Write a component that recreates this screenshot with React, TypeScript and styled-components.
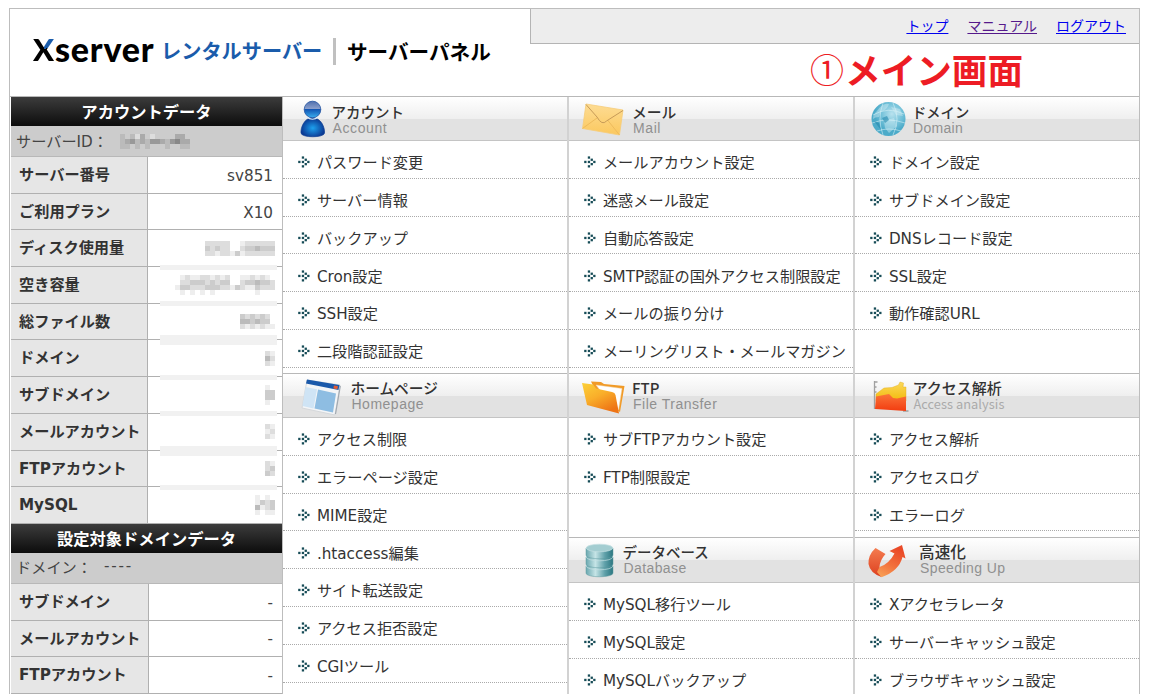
import React from 'react';
import styled, { createGlobalStyle } from 'styled-components';

const JP = `'DejaVu Sans', 'Noto Sans CJK JP', sans-serif`;
const CJK = `'Noto Sans CJK JP', sans-serif`;

const Global = createGlobalStyle`
  * { box-sizing: border-box; }
  html, body { margin: 0; background: #fff; overflow: hidden; }
  body { font-family: ${JP}; color: #333; }
`;

const Frame = styled.div`
  width: 1131px;
  height: 686px;
  margin: 8px 0 0 9px;
  border: 1px solid #bdbdbd;
  border-bottom: 0;
  overflow: hidden;
`;

const Header = styled.header`
  display: flex;
  justify-content: space-between;
  height: 88px;
  border-bottom: 1px solid #b8b8b8;
`;

const Logo = styled.div`
  display: flex;
  align-items: center;
  height: 84px;
  padding-left: 23px;
  font-family: ${CJK};
  font-weight: 700;
  white-space: nowrap;
`;

const LogoX = styled.span`
  width: 22px;
  margin-bottom: 4px;
  font: 900 31px/40px Lato, sans-serif;
  color: transparent;
  background: conic-gradient(from 0deg at 11px 20px, #1a5cab 0 75deg, #000 75deg 350deg, #1a5cab 350deg);
  -webkit-background-clip: text;
  background-clip: text;
`;

const LogoName = styled.span`
  width: 106px;
  margin-bottom: 4px;
  font: 900 34px/38px Lato, sans-serif;
  letter-spacing: 0.8px;
  color: #000;
`;

const LogoPart = styled.span<{ $color: string; $size: number; $w: number }>`
  width: ${p => p.$w}px;
  font-size: ${p => p.$size}px;
  line-height: 30px;
  color: ${p => p.$color};
`;

const LogoRule = styled.span`
  width: 3px;
  height: 27px;
  margin: 0 11px 0 8px;
  background: #c0c0c0;
`;

const Side = styled.div`
  width: 609px;
`;

const Nav = styled.nav`
  display: flex;
  justify-content: flex-end;
  gap: 19px;
  height: 35px;
  padding-right: 13px;
  background: #ededed;
  border-left: 1px solid #b4b4b4;
  border-bottom: 1px solid #b4b4b4;
  font: 14px/32px ${CJK};
`;

const NavLink = styled.a<{ $visited?: boolean }>`
  color: ${p => (p.$visited ? '#551a8b' : '#0000ee')};
  text-decoration: underline;
  text-underline-offset: 2px;
`;

const Caption = styled.div`
  display: flex;
  justify-content: flex-end;
  padding-right: 116px;
  color: #ed1c24;
  font: 700 35.6px/50px ${CJK};
`;

const CaptionNumber = styled.span`
  margin-right: 1px;
  font-size: 34px;
  font-weight: 400;
`;

const Body = styled.div`
  display: flex;
`;

const Sidebar = styled.aside`
  width: 273px;
  padding-left: 1px;
  border-right: 1px solid #bdbdbd;
`;

const SideTitle = styled.h2`
  height: 29px;
  margin: 0;
  background: linear-gradient(#3c3c3c, #0c0c0c);
  color: #fff;
  font: 700 16.3px/28px ${CJK};
  text-align: center;
`;

const SideInfo = styled.div`
  display: flex;
  align-items: center;
  height: 31px;
  padding-left: 5px;
  background: #ccc;
  border-bottom: 1px solid #b8b8b8;
  font-size: 15.2px;
  color: #444;
`;

const InfoName = styled.span<{ $w: number }>`
  width: ${p => p.$w}px;
  margin-bottom: 3px;
  white-space: nowrap;
`;

const InfoDashes = styled.span`
  letter-spacing: 1.8px;
  margin-bottom: 3px;
`;

const DataRow = styled.div`
  display: flex;
  height: 36.7px;
`;

const DataLabel = styled.div<{ $w: number }>`
  width: ${p => p.$w}px;
  padding-left: 8px;
  background: #e6e6e6;
  border-right: 1px solid #b0b0b0;
  border-bottom: 1px solid #b0b0b0;
  font-size: 15.2px;
  font-weight: 700;
  line-height: 37px;
  white-space: nowrap;
`;

const DataValue = styled.div<{ $masked?: boolean }>`
  position: relative;
  flex: 1;
  display: flex;
  align-items: center;
  justify-content: flex-end;
  padding-top: ${p => (p.$masked ? 0 : 2)}px;
  padding-right: ${p => (p.$masked ? 7 : 9)}px;
  border-bottom: 1px solid #b0b0b0;
  font-size: 15.2px;
  color: #444;
`;

const Smear = styled.span<{ $h: number }>`
  position: absolute;
  right: 5px;
  bottom: ${p => -1 - p.$h / 2}px;
  z-index: 1;
  width: 117px;
  height: ${p => p.$h}px;
  background: #f1f1f1;
`;

const Columns = styled.main`
  display: flex;
  width: 856px;
  height: 597px;
`;

const Column = styled.div<{ $last?: boolean }>`
  width: ${p => (p.$last ? 284 : 286)}px;
  border-right: ${p => (p.$last ? '0' : '2px solid #d2d2d2')};
`;

const Section = styled.section<{ $h?: number; $ruled?: boolean }>`
  height: ${p => (p.$h ? p.$h + 'px' : 'auto')};
  border-top: ${p => (p.$ruled ? '1px solid #b8b8b8' : '0')};
`;

const SectionHead = styled.header<{ $h: number; $icon: number }>`
  display: grid;
  grid-template-columns: ${p => p.$icon}px 1fr;
  height: ${p => p.$h}px;
  padding-left: 10px;
  background: linear-gradient(#fff, #efefef 50%, #e2e2e2 51%, #e2e2e2);
  border-bottom: 1px solid #c4c4c4;
  svg { display: block; width: 50px; height: 43px; }
`;

const HeadText = styled.div<{ $top: number }>`
  display: flex;
  flex-direction: column;
  padding-top: ${p => p.$top}px;
  white-space: nowrap;
`;

const HeadTitle = styled.span<{ $size: number }>`
  font: 500 ${p => p.$size}px/17px ${CJK};
  color: #333;
`;

const HeadSub = styled.span<{ $spacing: number; $narrow?: boolean }>`
  padding-left: 1px;
  font: ${p => (p.$narrow ? `12.8px/16px ${CJK}` : `14px/16px 'Liberation Sans', sans-serif`)};
  letter-spacing: ${p => p.$spacing}px;
  color: ${p => (p.$narrow ? '#aaa' : '#909090')};
`;

const Item = styled.div`
  display: flex;
  align-items: center;
  gap: 6.5px;
  height: 37.8px;
  padding: 3.6px 0 0 15.4px;
  border-bottom: 1px dotted #aaa;
  font-size: 15.2px;
  white-space: nowrap;
  svg { flex: none; margin-top: 2px; }
`;

const Bullet = () => (
  <svg width="12" height="12" viewBox="0 0 12 12" fill="#174c57">
    <rect x="0.2" y="4.800" width="2.300" height="2.300" />
    <rect x="3.800" y="4.800" width="2.300" height="2.300" />
    <rect x="3.800" y="0.400" width="2.300" height="2.300" />
    <rect x="6.600" y="2.600" width="2.300" height="2.300" />
    <rect x="9.200" y="4.800" width="2.300" height="2.300" />
    <rect x="6.600" y="7" width="2.300" height="2.300" />
    <rect x="3.800" y="9.200" width="2.300" height="2.300" />
  </svg>
);

/* Pixelated value: every character is one 5px cell, a hex digit giving its grey level. */
const Mosaic = ({ rows }: { rows: string[] }) => (
  <svg width={rows[0].length * 5} height={rows.length * 5} shapeRendering="crispEdges">
    {rows.flatMap((row, y) =>
      row.split('').map((c, x) =>
        c === '.' ? null : <rect key={`${x}-${y}`} x={x * 5} y={y * 5} width="5" height="5" fill={`#${c}${c}${c}`} />
      )
    )}
  </svg>
);

const AccountIcon = () => (
  <svg viewBox="0 0 50 43">
    <defs>
      <radialGradient id="acb" cx="50%" cy="55%"><stop offset="0" stopColor="#1da0ee" /><stop offset="1" stopColor="#0b3a94" /></radialGradient>
      <linearGradient id="ach" x1="0" y1="0" x2="0" y2="1"><stop offset="0" stopColor="#4f6fae" /><stop offset=".45" stopColor="#8b9fcb" /><stop offset=".5" stopColor="#1256b4" /><stop offset="1" stopColor="#3bb0f0" /></linearGradient>
    </defs>
    <path d="M19.5 20.5 C11 21 7.500 31 8 36 C8.500 41 31 41 31.500 36 C32 31 28.500 21 19.500 20.500Z" fill="url(#acb)" stroke="#0f3f92" strokeWidth=".7" />
    <circle cx="19.500" cy="12.500" r="8.300" fill="url(#ach)" stroke="#2050a0" strokeWidth=".8" />
    <path d="M13.500 20 Q19.500 24.500 25.500 20" fill="none" stroke="#dcecfa" strokeWidth="1.200" />
  </svg>
);

const MailIcon = () => (
  <svg viewBox="0 0 50 43">
    <defs><linearGradient id="ml" x1="0" y1="0" x2="0" y2="1"><stop offset="0" stopColor="#fddc94" /><stop offset="1" stopColor="#fbc85e" /></linearGradient></defs>
    <path d="M7 7 L44 13 L40.500 38 L3.500 31.500Z" fill="url(#ml)" stroke="#f6cd7a" strokeWidth=".8" />
    <path d="M3.500 31.500 L18 21 M40.500 38 L28.500 23" stroke="#eebb5c" strokeWidth="1" fill="none" />
    <path d="M7 7.500 L18 20 Q23 29 27.500 24 L44 13.500" fill="none" stroke="#c79b58" strokeWidth="1" />
  </svg>
);

const DomainIcon = () => (
  <svg viewBox="0 0 50 43">
    <defs><radialGradient id="dm" cx="60%" cy="35%"><stop offset="0" stopColor="#b9e2ee" /><stop offset=".6" stopColor="#76c3da" /><stop offset="1" stopColor="#4dabc9" /></radialGradient></defs>
    <circle cx="23.500" cy="22" r="17" fill="url(#dm)" />
    <path d="M12 14 Q18 5 24 7 Q22 13 16 15 L14 20 Q10 20 8 22 Q8 17 12 14Z M26 10 L35 12 L38 19 L31 18Z M19 24 L29 21 L32 29 L24 36 L20 31Z" fill="#dff3f8" opacity=".4" />
    <path d="M8 18 Q23 9 39 17 M7 26 Q23 20 40 26 M12 34 Q24 30 36 34 M18 6 Q12 22 18 38 M28 6 Q36 22 28 38" fill="none" stroke="#d9f2f8" strokeWidth=".8" opacity=".7" />
    <path d="M17 21 l5 -2 2 4 -4 3z M9 24 l5 2 2 7z" fill="#2589ad" opacity=".6" />
  </svg>
);

const HomeIcon = () => (
  <svg viewBox="0 0 50 43">
    <path d="M14 6 L47 11 L42 41 L9 34Z" fill="#f3f5f7" stroke="#d5d8db" strokeWidth="1" />
    <path d="M47.300 12 L42.500 40" stroke="#a2a9b0" strokeWidth="1.200" />
    <path d="M14 5.500 L46.500 11 L45.500 16 L13 9.500Z" fill="#1a59aa" />
    <path d="M41 11.500 L45 12.300 L44.300 15.200 L40.300 14.400Z" fill="#e65c33" />
    <path d="M12.500 13 L24 15.300 L20.500 34.500 L9.500 32Z" fill="#cfe4f5" />
    <path d="M25 15.500 L43 19.500 L40 38.500 L21.500 34.500Z" fill="#8ebde2" />
  </svg>
);

const FolderIcon = () => (
  <svg viewBox="0 0 50 43">
    <defs><linearGradient id="fd" x1="0" y1="0" x2=".6" y2="1"><stop offset="0" stopColor="#fcd038" /><stop offset=".5" stopColor="#f9ae2a" /><stop offset="1" stopColor="#ee7415" /></linearGradient></defs>
    <path d="M12 7.500 L22 8 L25 10 L45.500 12 L41 38 L20 24Z" fill="#f19a26" />
    <path d="M17 11 L43 14.500 L39.500 36 L28 25Z" fill="#fff" stroke="#f1d6af" strokeWidth=".5" />
    <path d="M3 9 L14 10.500 L17 14.500 L33 18 Q36 18.500 36.500 21 L40 39.500 L8 31Z" fill="url(#fd)" />
  </svg>
);

const ChartIcon = () => (
  <svg viewBox="0 0 50 43">
    <defs>
      <linearGradient id="ch" x1="0" y1="0" x2="0" y2="1"><stop offset="0" stopColor="#fb7438" /><stop offset="1" stopColor="#f23c10" /></linearGradient>
      <linearGradient id="cy" x1="0" y1="0" x2="0" y2="1"><stop offset="0" stopColor="#fbd95a" /><stop offset="1" stopColor="#f3b90b" /></linearGradient>
    </defs>
    <path d="M9.500 7 V35 M9.500 8 h3 M9.500 13 h2 M9.500 18 h2 M38 37 H43.500" stroke="#a0a0a0" strokeWidth="1.300" fill="none" />
    <path d="M11 20 L19 14 L27 13.500 L33.500 11 L35 8 L38.500 9 L38 13 L41 13 V27 H11Z" fill="url(#cy)" stroke="#e0aa10" strokeWidth=".4" />
    <path d="M11 22.500 L24 20 L28 24 L32 24.500 L41 22.500 V37 L10 35Z" fill="url(#ch)" />
  </svg>
);

const DatabaseIcon = () => (
  <svg viewBox="0 0 50 43">
    <defs><linearGradient id="db"><stop offset="0" stopColor="#6aa7af" /><stop offset=".35" stopColor="#c5e4e6" /><stop offset=".7" stopColor="#5fa0a9" /><stop offset="1" stopColor="#2c7781" /></linearGradient></defs>
    {[26, 17, 8].map(y => (
      <g key={y}>
        <path d={`M7 ${y + 2} V${y + 9} C7 ${y + 14} 34 ${y + 14} 34 ${y + 9} V${y + 2}Z`} fill="url(#db)" stroke="#5c999f" strokeWidth=".5" />
        <ellipse cx="20.500" cy={y + 2} rx="13.300" ry="3.800" fill={y === 8 ? '#a3cdd1' : 'url(#db)'} stroke="#c4e0e2" strokeWidth=".7" />
      </g>
    ))}
  </svg>
);

const SpeedIcon = () => (
  <svg viewBox="0 0 50 43">
    <defs>
      <linearGradient id="sp" x1="0" y1="1" x2=".5" y2="0"><stop offset="0" stopColor="#f9a95a" /><stop offset=".5" stopColor="#f2703c" /><stop offset="1" stopColor="#ea4a28" /></linearGradient>
      <linearGradient id="sq" x1="0" y1="0" x2="0" y2="1"><stop offset="0" stopColor="#f47c50" /><stop offset="1" stopColor="#dd401f" /></linearGradient>
    </defs>
    <path d="M10.500 10 L20.500 16 Q15 22 14.500 29 L16.500 39 Q5 35 3.500 26 Q3 17 10.500 10Z" fill="url(#sq)" />
    <path d="M14.500 29 Q24 26 29.500 15.500 L24.500 13 L37 7 L40.500 20.500 L37.500 19 Q34 33 16.500 39.300 L12 34Z" fill="url(#sp)" />
  </svg>
);

interface SectionData {
  title: string;
  sub: string;
  size: number;
  spacing: number;
  icon: React.FC;
  iconWidth: number;
  items: string[];
  height?: number;
  head?: number;
  narrow?: boolean;
}

const columns: SectionData[][] = [
  [
    { title: 'アカウント', sub: 'Account', size: 14.5, spacing: 0.6, icon: AccountIcon, iconWidth: 38.5, height: 276, items: ['パスワード変更', 'サーバー情報', 'バックアップ', 'Cron設定', 'SSH設定', '二段階認証設定'] },
    { title: 'ホームページ', sub: 'Homepage', size: 14.7, spacing: 0.5, icon: HomeIcon, iconWidth: 57.5, items: ['アクセス制限', 'エラーページ設定', 'MIME設定', '.htaccess編集', 'サイト転送設定', 'アクセス拒否設定', 'CGIツール'] },
  ],
  [
    { title: 'メール', sub: 'Mail', size: 14.8, spacing: 0.6, icon: MailIcon, iconWidth: 53, height: 276, items: ['メールアカウント設定', '迷惑メール設定', '自動応答設定', 'SMTP認証の国外アクセス制限設定', 'メールの振り分け', 'メーリングリスト・メールマガジン'] },
    { title: 'FTP', sub: 'File Transfer', size: 15, spacing: 0.5, icon: FolderIcon, iconWidth: 53, height: 164, items: ['サブFTPアカウント設定', 'FTP制限設定'] },
    { title: 'データベース', sub: 'Database', size: 14.5, spacing: 0.4, icon: DatabaseIcon, iconWidth: 43.5, head: 45, items: ['MySQL移行ツール', 'MySQL設定', 'MySQLバックアップ'] },
  ],
  [
    { title: 'ドメイン', sub: 'Domain', size: 14.3, spacing: 0.3, icon: DomainIcon, iconWidth: 47, height: 276, items: ['ドメイン設定', 'サブドメイン設定', 'DNSレコード設定', 'SSL設定', '動作確認URL'] },
    { title: 'アクセス解析', sub: 'Access analysis', size: 15, spacing: 0.05, icon: ChartIcon, iconWidth: 47.5, height: 164, narrow: true, items: ['アクセス解析', 'アクセスログ', 'エラーログ'] },
    { title: '高速化', sub: 'Speeding Up', size: 15.7, spacing: 0.4, icon: SpeedIcon, iconWidth: 54, head: 45, items: ['Xアクセラレータ', 'サーバーキャッシュ設定', 'ブラウザキャッシュ設定'] },
  ],
];

const account: { label: string; value?: string; mask?: string[]; smear?: number }[] = [
  { label: 'サーバー番号', value: 'sv851' },
  { label: 'ご利用プラン', value: 'X10' },
  { label: 'ディスク使用量', mask: ['dddddf.edddddd', 'cdcddf.dccbccc', 'ddeddecedddddd'], smear: 5 },
  { label: '空き容量', mask: ['fedeeddededf.eededef', 'fddcccdcdccf.dccbccd', 'eccdddcccddecdeecddd', 'fefefefeffffffffefff'], smear: 5 },
  { label: '総ファイル数', mask: ['fcdcdcdf', 'fbbcbccf', 'fdededee'], smear: 10 },
  { label: 'ドメイン', mask: ['fde', 'fbd', 'fde'], smear: 5 },
  { label: 'サブドメイン', mask: ['fef', 'fcc', 'fcc', 'fef'], smear: 5 },
  { label: 'メールアカウント', mask: ['de', 'ed', 'de'], smear: 10 },
  { label: 'FTPアカウント', mask: ['fde', 'fdc', 'fcd'], smear: 5 },
  { label: 'MySQL', mask: ['efef', 'ecdc', 'bedc', 'efee'] },
];

const Block = ({ data, ruled }: { data: SectionData; ruled: boolean }) => {
  const Icon = data.icon;
  return (
    <Section $h={data.height} $ruled={ruled}>
      <SectionHead $h={data.head ?? 44} $icon={data.iconWidth}>
        <Icon />
        <HeadText $top={ruled ? 5 : 6}>
          <HeadTitle $size={data.size}>{data.title}</HeadTitle>
          <HeadSub $spacing={data.spacing} $narrow={data.narrow}>{data.sub}</HeadSub>
        </HeadText>
      </SectionHead>
      {data.items.map(text => (
        <Item key={text}><Bullet />{text}</Item>
      ))}
    </Section>
  );
};

export default function App() {
  return (
    <>
      <Global />
      <Frame>
        <Header>
          <Logo>
            <LogoX>X</LogoX>
            <LogoName>server</LogoName>
            <LogoPart $color="#1a5cab" $size={20.2} $w={164}>レンタルサーバー</LogoPart>
            <LogoRule />
            <LogoPart $color="#000" $size={20.6} $w={146}>サーバーパネル</LogoPart>
          </Logo>
          <Side>
            <Nav>
              <NavLink>トップ</NavLink>
              <NavLink $visited>マニュアル</NavLink>
              <NavLink>ログアウト</NavLink>
            </Nav>
            <Caption><CaptionNumber>①</CaptionNumber>メイン画面</Caption>
          </Side>
        </Header>
        <Body>
          <Sidebar>
            <SideTitle>アカウントデータ</SideTitle>
            <SideInfo>
              <InfoName $w={104}>サーバーID：</InfoName>
              <Mosaic rows={['bcbdacdccccaac', 'ba9bab99ab98aa', 'bbcbcbcccbccbb']} />
            </SideInfo>
            {account.map(row => (
              <DataRow key={row.label}>
                <DataLabel $w={137}>{row.label}</DataLabel>
                <DataValue $masked={!!row.mask}>
                  {row.value}
                  {row.mask && <Mosaic rows={row.mask} />}
                  {row.smear && <Smear $h={row.smear} />}
                </DataValue>
              </DataRow>
            ))}
            <SideTitle>設定対象ドメインデータ</SideTitle>
            <SideInfo>
              <InfoName $w={88}>ドメイン：</InfoName>
              <InfoDashes>----</InfoDashes>
            </SideInfo>
            {['サブドメイン', 'メールアカウント', 'FTPアカウント'].map(label => (
              <DataRow key={label}>
                <DataLabel $w={138}>{label}</DataLabel>
                <DataValue>-</DataValue>
              </DataRow>
            ))}
          </Sidebar>
          <Columns>
            {columns.map((sections, i) => (
              <Column key={i} $last={i === 2}>
                {sections.map((s, j) => (
                  <Block key={s.title} data={s} ruled={j > 0} />
                ))}
              </Column>
            ))}
          </Columns>
        </Body>
      </Frame>
    </>
  );
}
